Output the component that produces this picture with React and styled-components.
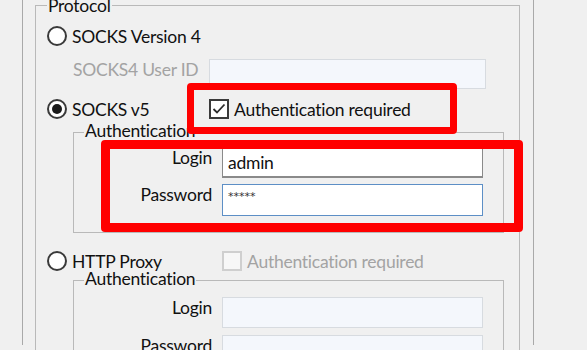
import React from "react";
import styled, { createGlobalStyle } from "styled-components";

const GlobalStyle = createGlobalStyle`
  html, body {
    margin: 0;
    padding: 0;
    background: #f0f0f0;
    overflow: hidden;
  }
`;

const Page = styled.div`
  position: relative;
  width: 587px;
  height: 350px;
  overflow: hidden;
  background: #f0f0f0;
  font-family: Lato, "Liberation Sans", sans-serif;
  font-size: 17.5px;
  letter-spacing: -0.25px;
  color: #111;
`;

const Frame = styled.div`
  box-sizing: border-box;
  margin-left: 22px;
  width: 512px;
  height: 100%;
  padding: 0 13px 0 12px;
  border-left: 1px solid #a9a9a9;
  border-right: 1px solid #a9a9a9;
`;

const GroupBox = styled.fieldset`
  box-sizing: border-box;
  min-width: 0;
  margin: ${(p) => p.$top || 0}px 0 0 ${(p) => p.$left || 0}px;
  width: ${(p) => (p.$width ? `${p.$width}px` : "auto")};
  padding: 0 0 ${(p) => p.$bottom || 0}px 0;
  border: 1px solid #b9b9b9;
`;

const Legend = styled.legend`
  margin-left: ${(p) => p.$indent}px;
  padding: ${(p) => (p.$high ? "2px 1px 0" : "0 1px 2px")};
  font-size: 17.5px;
  line-height: 18px;
  color: #111;
`;

const Body = styled.div`
  display: flex;
  flex-direction: column;
  padding-left: 11px;
`;

const Row = styled.div`
  display: grid;
  grid-template-columns: ${(p) => p.$cols};
  align-items: ${(p) => p.$align || "center"};
  margin-top: ${(p) => p.$top}px;
  height: ${(p) => p.$height}px;
`;

const Option = styled.div`
  display: flex;
  align-items: center;
  gap: 5px;
  line-height: 20px;
`;

const Radio = styled.span`
  box-sizing: border-box;
  width: 20px;
  height: 20px;
  border-radius: 50%;
  border: 2px solid #3a3a3a;
  background: #fff;
  display: flex;
  align-items: center;
  justify-content: center;
  &::after {
    content: "";
    display: ${(p) => (p.$checked ? "block" : "none")};
    width: 10px;
    height: 10px;
    border-radius: 50%;
    background: #1a1a1a;
  }
`;

const Box = styled.span`
  box-sizing: border-box;
  width: 20px;
  height: 20px;
  border: 2px solid ${(p) => (p.$disabled ? "#cfcfcf" : "#3a3a3a")};
  background: ${(p) => (p.$disabled ? "#f7f7f7" : "#fff")};
  display: flex;
  align-items: center;
  justify-content: center;
`;

const Caption = styled.span`
  padding-top: 2px;
  color: ${(p) => (p.$disabled ? "#a3a3a3" : "#111")};
  white-space: nowrap;
`;

const Label = styled.span`
  padding-top: 2px;
  line-height: 18px;
  color: ${(p) => (p.$disabled ? "#a3a3a3" : "#111")};
  text-align: ${(p) => (p.$right ? "right" : "left")};
  padding-left: ${(p) => p.$indent || 0}px;
  white-space: nowrap;
`;

const Field = styled.div`
  box-sizing: border-box;
  height: 100%;
  padding-left: 5px;
  background: ${(p) => (p.$disabled ? "#f4f7fc" : "#fff")};
  border: 1px solid
    ${(p) => (p.$disabled ? "#d7dbe0" : p.$focused ? "#5d8fc6" : "#8a8a8a")};
  border-bottom-width: ${(p) => (p.$disabled || p.$focused ? 1 : 2)}px;
  display: flex;
  align-items: ${(p) => (p.$masked ? "flex-start" : "center")};
  color: #111;
`;

const Mask = styled.span`
  font-family: "DejaVu Sans", sans-serif;
  font-size: 11px;
  letter-spacing: 0;
  line-height: 12px;
  margin-top: 6px;
  color: #333;
`;

const Callout = styled.div`
  position: absolute;
  box-sizing: border-box;
  left: ${(p) => p.$x}px;
  top: ${(p) => p.$y}px;
  width: ${(p) => p.$w}px;
  height: ${(p) => p.$h}px;
  border: ${(p) => p.$stroke}px solid #ff0000;
  border-radius: 4px;
  pointer-events: none;
`;

function Check() {
  return (
    <svg width="16" height="16" viewBox="0 0 16 16">
      <polyline
        points="2.5,8 6,11.5 13.5,3.5"
        fill="none"
        stroke="#2b2b2b"
        strokeWidth="1.8"
      />
    </svg>
  );
}

function Credentials({ top, login, password, disabled, loginTop, passTop }) {
  return (
    <GroupBox $top={top} $left={26} $width={431} $bottom={16}>
      <Legend $indent={10}>Authentication</Legend>
      <Row $cols="138px 10px 261px" $align="start" $top={loginTop} $height={31}>
        <Label $right>Login</Label>
        <span />
        <Field $disabled={disabled}>{login}</Field>
      </Row>
      <Row $cols="138px 10px 261px" $align="start" $top={passTop} $height={32}>
        <Label $right>Password</Label>
        <span />
        <Field $disabled={disabled} $focused={!disabled} $masked>
          {password && <Mask>{password}</Mask>}
        </Field>
      </Row>
    </GroupBox>
  );
}

export default function App() {
  return (
    <>
      <GlobalStyle />
      <Page>
        <Frame>
          <GroupBox $top={-5}>
            <Legend $indent={11} $high>
              Protocol
            </Legend>
            <Body>
              <Row $cols="162px 1fr" $top={10} $height={20}>
                <Option>
                  <Radio />
                  <Caption>SOCKS Version 4</Caption>
                </Option>
              </Row>
              <Row $cols="162px 277px" $align="start" $top={14} $height={30}>
                <Label $disabled $indent={26}>
                  SOCKS4 User ID
                </Label>
                <Field $disabled />
              </Row>
              <Row $cols="162px 1fr" $top={9} $height={21}>
                <Option>
                  <Radio $checked />
                  <Caption>SOCKS v5</Caption>
                </Option>
                <Option>
                  <Box>
                    <Check />
                  </Box>
                  <Caption>Authentication required</Caption>
                </Option>
              </Row>
              <Credentials
                top={3}
                login="admin"
                password="*****"
                loginTop={5}
                passTop={6}
              />
              <Row $cols="175px 1fr" $top={17} $height={20}>
                <Option>
                  <Radio />
                  <Caption>HTTP Proxy</Caption>
                </Option>
                <Option>
                  <Box $disabled />
                  <Caption $disabled>Authentication required</Caption>
                </Option>
              </Row>
              <Credentials top={0} disabled loginTop={7} passTop={7} />
            </Body>
          </GroupBox>
        </Frame>
        <Callout $x={187} $y={83} $w={270} $h={51} $stroke={7} />
        <Callout $x={101} $y={140} $w={422} $h={92} $stroke={9} />
      </Page>
    </>
  );
}
